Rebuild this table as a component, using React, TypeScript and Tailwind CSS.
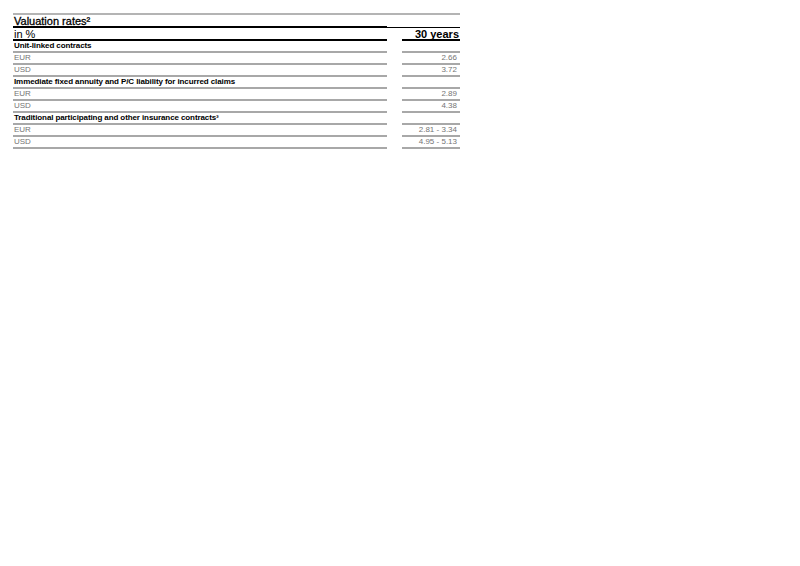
import React from "react";

type Row = { label: string; value: string; kind: "head" | "data" };

const rows: Row[] = [
  { label: "Unit-linked contracts", value: "", kind: "head" },
  { label: "EUR", value: "2.66", kind: "data" },
  { label: "USD", value: "3.72", kind: "data" },
  { label: "Immediate fixed annuity and P/C liability for incurred claims", value: "", kind: "head" },
  { label: "EUR", value: "2.89", kind: "data" },
  { label: "USD", value: "4.38", kind: "data" },
  { label: "Traditional participating and other insurance contracts³", value: "", kind: "head" },
  { label: "EUR", value: "2.81 - 3.34", kind: "data" },
  { label: "USD", value: "4.95 - 5.13", kind: "data" },
];

function TableRow({ row }: { row: Row }) {
  const text =
    row.kind === "head"
      ? "font-bold text-black tracking-[-0.1px]"
      : "font-normal text-[#747474]";
  return (
    <div className="flex gap-[15px] text-[8px] leading-[10px]">
      <div className={`h-[12px] w-[374px] border-b-2 border-[#a8a8a8] pl-px ${text}`}>{row.label}</div>
      <div className={`h-[12px] w-[58px] border-b-2 border-[#a8a8a8] pr-[3px] text-right ${text}`}>{row.value}</div>
    </div>
  );
}

export default function App() {
  return (
    <div className="h-[566px] w-[800px] bg-white pt-[13px] pl-[13px]" style={{ fontFamily: '"Liberation Sans", Arial, sans-serif' }}>
      <div className="w-[447px]">
        <div className="border-t-2 border-[#b4b4b4]" />
        <div className="flex items-end">
          <div className="h-[13px] w-[374px] border-b-2 border-black pl-px text-[11px] leading-[12px] text-black [-webkit-text-stroke:0.3px_black]">
            Valuation rates²
          </div>
          <div className="h-[13px] flex-1 border-b border-black" />
        </div>
        <div className="flex gap-[15px] pt-px text-[11px] leading-[10px]">
          <div className="h-[12px] w-[374px] border-b-2 border-black pl-px text-black">in %</div>
          <div className="h-[12px] w-[58px] border-b-2 border-black pr-px text-right font-bold text-black">30 years</div>
        </div>
        {rows.map((r, i) => (
          <TableRow key={i} row={r} />
        ))}
      </div>
    </div>
  );
}
